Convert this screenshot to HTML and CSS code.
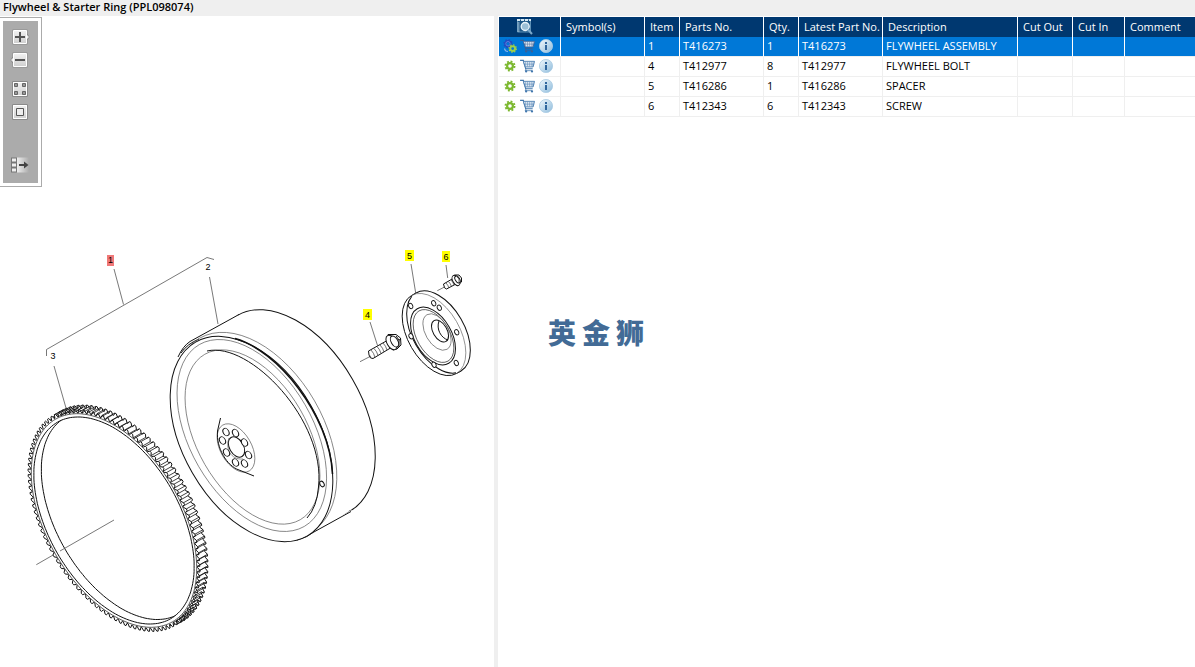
FILE: index.html
```html
<!DOCTYPE html>
<html lang="en">
<head>
<meta charset="utf-8">
<title>Flywheel &amp; Starter Ring (PPL098074)</title>
<link rel="stylesheet" href="styles.css">
</head>
<body>
<svg class="defs" aria-hidden="true">
  <defs>
    <linearGradient id="face" x1="0" y1="0" x2="0" y2="1"><stop offset="0" stop-color="#f2f2f2"/><stop offset="1" stop-color="#cfcfcf"/></linearGradient>
    <linearGradient id="fade" x1="0" y1="0" x2="1" y2="0"><stop offset="0" stop-color="#eee"/><stop offset="1" stop-color="#ababab"/></linearGradient>
    <linearGradient id="disc" x1="0" y1="0" x2="1" y2="1"><stop offset="0" stop-color="#f4fafd"/><stop offset="1" stop-color="#8dbbdc"/></linearGradient>
    <symbol id="gear" viewBox="0 0 12 12">
      <circle cx="6" cy="6" r="4.6" fill="none" stroke="currentColor" stroke-width="1.8" stroke-dasharray="1.9 1.71"/>
      <circle cx="6" cy="6" r="2.9" fill="none" stroke="currentColor" stroke-width="2.2"/>
    </symbol>
    <symbol id="gears" viewBox="0 0 14 14">
      <g fill="none" stroke="#2448c0"><circle cx="5" cy="4.7" r="4" stroke-width="1.4" stroke-dasharray="1.5 1.64"/><circle cx="5" cy="4.7" r="2.6" stroke-width="2.2"/></g>
      <circle cx="5" cy="4.7" r="2.2" fill="none" stroke="#6f98ea" stroke-width=".7"/>
      <path d="M1.500 9.500q.5 3 3.500 3" fill="none" stroke="#8db4ee" stroke-width="1.2"/>
      <g fill="none" stroke="#9fd04a"><circle cx="9.7" cy="9.6" r="3.7" stroke-width="1.2" stroke-dasharray="1.4 1.5"/><circle cx="9.7" cy="9.6" r="2.4" stroke-width="1.9"/></g>
    </symbol>
    <symbol id="cart" viewBox="0 0 17 15">
      <path d="M0 1.500H3.500L6 10.500H13.500" fill="none" stroke="currentColor" stroke-width="1.200"/>
      <path class="basket" d="M3.500 2.500H15.500L14 8.500H5.500Z" stroke="currentColor" stroke-width=".9"/>
      <path d="M6 3v5M8 3v5M10 3v5M12 3v5M14 3l-.7 5M4 5.500h11" fill="none" stroke="currentColor" stroke-width=".5"/>
      <path d="M6.500 10.500L5.500 12.500H13" fill="none" stroke="currentColor" stroke-width=".8"/>
      <circle cx="6.500" cy="13.300" r="1.200" fill="currentColor"/><circle cx="12.800" cy="13.300" r="1.200" fill="currentColor"/>
    </symbol>
    <symbol id="info" viewBox="0 0 14 14">
      <circle cx="7" cy="7" r="6.600" fill="url(#disc)" stroke="#a9cbe3" stroke-width=".8"/>
      <path d="M6 3h2v2H6zM6 6h2v5H6z" fill="#2f669d"/>
    </symbol>
    <symbol id="lookup" viewBox="0 0 16 16">
      <path d="M.5 .5H13.500V13H.5Z" fill="#1c5585" stroke="#5d90b5"/>
      <path d="M0 1H14" stroke="#d6e8f3" stroke-width="2" stroke-dasharray="3 1"/>
      <path d="M1.500 3.500V12.500" stroke="#c4dcec" stroke-width="2" stroke-dasharray="1 1"/>
      <circle cx="8.200" cy="7.500" r="4" fill="#9bbfd6" stroke="#e8f3fa" stroke-width="1.400"/>
      <path d="M11 10.500L15 15" stroke="#7aa8ca" stroke-width="2"/>
    </symbol>
  </defs>
</svg>

<header class="title-bar"><h1>Flywheel &amp; Starter Ring (PPL098074)</h1></header>
<main class="workspace">
  <section class="drawing-pane" aria-label="Parts drawing">
    <div class="toolbar" role="toolbar" aria-label="Drawing tools">
      <button class="tool" aria-label="Zoom in"><svg viewBox="0 0 18 16"><path d="M.5.5h15v4l2 3.500-2 3.500v4H.5z" fill="#8a8a8a"/><path d="M1.500 1.500h13v13h-13z" fill="url(#face)" stroke="#fff"/><path d="M15 6l2 2-2 2z" fill="#eee"/><path d="M3 8h10M8 3v10" stroke="#555" stroke-width="2"/></svg></button>
      <button class="tool" aria-label="Zoom out"><svg viewBox="-2 0 18 16" class="left-tip"><path d="M.5.5h15v15H.5v-4l-2-3.500 2-3.500z" fill="#8a8a8a"/><path d="M1.500 1.500h13v13h-13z" fill="url(#face)" stroke="#fff"/><path d="M1 6l-2 2 2 2z" fill="#eee"/><path d="M3 8h10" stroke="#555" stroke-width="2"/></svg></button>
      <button class="tool tool-spaced" aria-label="Show all"><svg viewBox="0 0 18 16"><path d="M.5.5h15v15H.5z" fill="url(#face)" stroke="#8a8a8a"/><path d="M1.500 1.500h13v13h-13z" fill="none" stroke="#fff"/><g fill="#999" stroke="#666"><path d="M2.500 2.500h3v3h-3zM10.500 2.500h3v3h-3zM2.500 10.500h3v3h-3zM10.500 10.500h3v3h-3z"/></g></svg></button>
      <button class="tool" aria-label="Fit to window"><svg viewBox="0 0 18 16"><path d="M.5.5h15v15H.5z" fill="url(#face)" stroke="#8a8a8a"/><path d="M1.500 1.500h13v13h-13z" fill="none" stroke="#fff"/><path d="M4.500 4.500h7v7h-7z" fill="#eee" stroke="#555"/></svg></button>
      <button class="tool tool-last" aria-label="Toggle list"><svg viewBox="0 0 18 16"><path d="M5 .5h12v15H5z" fill="url(#fade)"/><path d="M-1 .5h6v15h-6z" fill="#777"/><path d="M0 1.500h4v3H0zM0 6.500h4v3H0zM0 11.500h4v3H0z" fill="#eee"/><path d="M7 8h7" stroke="#444" stroke-width="2"/><path d="M12 4.500l4.500 3.500-4.500 3.500z" fill="#444"/></svg></button>
    </div>
    <svg class="drawing" viewBox="0 16 494 651" preserveAspectRatio="xMinYMin meet" role="img" aria-label="Exploded view of flywheel and starter ring">
      <g class="ink" id="ring"></g>
      <g class="ink">
        <ellipse transform="translate(294 413) rotate(60)" rx="112.800" ry="67.500"/>
        <path class="blank" d="M181 352L189 342L238 314.500L351 515L351.500 510L307.400 535.800Z"/>
        <path d="M239 314.500L190 341.500Q183 346 178 357M181 353Q187 344 199 339M351 511.500L313 532.500Q308 537 297 540"/>
        <ellipse class="thin" transform="translate(255.500 435) rotate(60)" rx="111.800" ry="68.200"/>
        <ellipse transform="translate(251.500 439) rotate(60)" rx="111.800" ry="68.200"/>
        <path class="bold" d="M235 338.500C277 350 330 415 332.500 474"/>
        <ellipse class="thin" transform="translate(251.800 435.500) rotate(60)" rx="105" ry="61.500"/>
        <ellipse class="thin" transform="translate(252.500 437) rotate(60)" rx="95.500" ry="55"/>
        <path d="M207 351C250 341 326 421 318.500 487Q317 507 307 518"/>
        <ellipse transform="translate(322 484) rotate(60)" rx="3" ry="2"/>
        <ellipse class="thin" transform="translate(236 448) rotate(60)" rx="26.500" ry="15.500"/>
        <path d="M220.500 418L217.500 431C216 448 227 466 239 470L254 476"/>
        <ellipse transform="translate(236.500 447) rotate(60)" rx="11" ry="7"/>
        <path class="thin" d="M229 438C225 449 231 460 243 459"/>
        <g class="holes"><ellipse transform="translate(226 432) rotate(60)" rx="4" ry="2.800"/><ellipse transform="translate(235.500 433) rotate(60)" rx="4" ry="2.800"/><ellipse transform="translate(244.500 442.500) rotate(60)" rx="4" ry="2.800"/><ellipse transform="translate(248.500 455) rotate(60)" rx="4" ry="2.800"/><ellipse transform="translate(244.500 463.500) rotate(60)" rx="4" ry="2.800"/><ellipse transform="translate(235.500 462.500) rotate(60)" rx="4" ry="2.800"/><ellipse transform="translate(226.500 452.500) rotate(60)" rx="4" ry="2.800"/><ellipse transform="translate(222.500 440.500) rotate(60)" rx="4" ry="2.800"/></g>
      </g>
      <g class="ink">
        <ellipse transform="translate(438.500 332) rotate(60)" rx="45" ry="26"/>
        <path class="blank" d="M411.500 295.500L416 293L461 371L456.500 373.500Z"/>
        <path d="M411.500 295.500L416 293M461 371L456.500 373.500"/>
        <path d="M411.500 295.500A45 26 60 0 0 456.500 373.500"/>
        <path class="thin" d="M411.500 295.500A45 26 60 0 1 456.500 373.500"/>
        <ellipse transform="translate(433 336) rotate(60)" rx="31.500" ry="18.500"/>
        <ellipse class="mid" transform="translate(433.500 336) rotate(60)" rx="29" ry="16.500"/>
        <ellipse class="thin" transform="translate(437 332) rotate(60)" rx="20" ry="11.500"/>
        <ellipse transform="translate(440 331) rotate(60)" rx="12" ry="7"/>
        <path d="M439 321C436 329 441 338 448 340"/>
        <g class="holes"><ellipse transform="translate(410.700 306) rotate(60)" rx="2.800" ry="2"/><ellipse transform="translate(433.700 303.300) rotate(60)" rx="2.800" ry="2"/><ellipse transform="translate(439.300 307.700) rotate(60)" rx="2.800" ry="2"/><ellipse transform="translate(456.700 332.300) rotate(60)" rx="2.800" ry="2"/><ellipse transform="translate(456.300 363) rotate(60)" rx="2.800" ry="2"/><ellipse transform="translate(434 364.700) rotate(60)" rx="2.800" ry="2"/><ellipse transform="translate(411 336.300) rotate(60)" rx="2.800" ry="2"/></g>
      </g>
      <g class="ink">
        <path class="leader" d="M360 361.700L371 356"/>
        <path d="M368.500 351L389 339.500L393 346.500L373 358.500Q370 359 369 355Z"/>
        <path class="mid" d="M371 350q3 3 4 7.500M374 348.500q3 3 4 7M377 346.500q3 3 4 7M380 345q3 3 4 7M383 343q3 3 4 7M386 341.500q3 3 4 7"/>
        <path class="solid" d="M388 334.500L396 334.500L400.500 338L401 345L397 349L393 350Z"/>
        <ellipse transform="translate(391.500 342.500) rotate(60)" rx="8" ry="4.500"/>
        <ellipse transform="translate(394.500 341.500) rotate(60)" rx="6" ry="3.300"/>
        <path d="M396 336l3 4v7M399 340l2-1"/>
      </g>
      <g class="ink">
        <path class="leader" d="M437.300 290.700L444.500 287"/>
        <path d="M443.500 284L453 278.500L456 284L446.500 289Q444 289 443.500 284Z"/>
        <path class="mid" d="M446 283q2 2 3 5M448.500 281.500q2 2 3 5M451 280q2 2 3 5"/>
        <path class="solid" d="M454.500 275L459 275L461.500 278L461.500 282L457 286Z"/>
        <ellipse transform="translate(456 280.500) rotate(60)" rx="5.600" ry="3.200"/>
        <ellipse transform="translate(457.500 279.500) rotate(60)" rx="3.800" ry="2.200"/>
        <path class="mid" d="M457 277l2 2v4"/>
      </g>
      <path class="leader" d="M214 259.500L207 257.500L46.500 349.500V356M114 269L123.500 304.500M209.500 277L218 324M54 366L66 408M411 264L415.700 293M446 265L447.700 278M370 322L377.700 346M36.300 564.700L54 554.500M60 551L114 520"/>
      <rect class="mark-red" x="107" y="255" width="7" height="11"/>
      <rect class="mark" x="405" y="250" width="9" height="11"/>
      <rect class="mark" x="442" y="251" width="8" height="11"/>
      <rect class="mark" x="363" y="309" width="9" height="11"/>
      <g class="callouts"><text x="110.500" y="263">1</text><text x="208" y="270">2</text><text x="53" y="359">3</text><text x="367.500" y="318">4</text><text x="409.500" y="259">5</text><text x="446" y="260">6</text></g>
    </svg>
  </section>
  <div class="splitter" role="separator"></div>
  <section class="list-pane" aria-label="Parts list">
    <table class="parts">
      <colgroup><col class="c-actions"><col class="c-wide"><col class="c-narrow"><col class="c-wide"><col class="c-narrow"><col class="c-wide"><col class="c-desc"><col class="c-out"><col class="c-in"><col></colgroup>
      <thead><tr><th class="lookup-cell"><button class="icon lookup" aria-label="Search parts"><svg><use href="#lookup"/></svg></button></th><th>Symbol(s)</th><th>Item</th><th>Parts No.</th><th>Qty.</th><th>Latest Part No.</th><th>Description</th><th>Cut Out</th><th>Cut In</th><th>Comment</th></tr></thead>
      <tbody>
        <tr class="selected"><td><div class="actions"><button class="icon gear" aria-label="Assembly"><svg><use href="#gears"/></svg></button><button class="icon cart" aria-label="Add to cart"><svg><use href="#cart"/></svg></button><button class="icon info" aria-label="Information"><svg><use href="#info"/></svg></button></div></td><td></td><td>1</td><td>T416273</td><td>1</td><td>T416273</td><td>FLYWHEEL ASSEMBLY</td><td></td><td></td><td></td></tr>
        <tr><td><div class="actions"><button class="icon gear" aria-label="Part"><svg><use href="#gear"/></svg></button><button class="icon cart" aria-label="Add to cart"><svg><use href="#cart"/></svg></button><button class="icon info" aria-label="Information"><svg><use href="#info"/></svg></button></div></td><td></td><td>4</td><td>T412977</td><td>8</td><td>T412977</td><td>FLYWHEEL BOLT</td><td></td><td></td><td></td></tr>
        <tr><td><div class="actions"><button class="icon gear" aria-label="Part"><svg><use href="#gear"/></svg></button><button class="icon cart" aria-label="Add to cart"><svg><use href="#cart"/></svg></button><button class="icon info" aria-label="Information"><svg><use href="#info"/></svg></button></div></td><td></td><td>5</td><td>T416286</td><td>1</td><td>T416286</td><td>SPACER</td><td></td><td></td><td></td></tr>
        <tr><td><div class="actions"><button class="icon gear" aria-label="Part"><svg><use href="#gear"/></svg></button><button class="icon cart" aria-label="Add to cart"><svg><use href="#cart"/></svg></button><button class="icon info" aria-label="Information"><svg><use href="#info"/></svg></button></div></td><td></td><td>6</td><td>T412343</td><td>6</td><td>T412343</td><td>SCREW</td><td></td><td></td><td></td></tr>
      </tbody>
    </table>
    <div class="watermark" lang="zh"><span>英</span><span>金</span><span>狮</span></div>
  </section>
</main>
<script src="ring.js"></script>
</body>
</html>
```
FILE: styles.css
```css
* { box-sizing: border-box; }
body {
  margin: 0;
  min-height: 100vh;
  display: flex;
  flex-direction: column;
  background: #fff;
  color: #000;
  font: 11px/16px "Open Sans", "Noto Sans", sans-serif;
}
.defs { position: absolute; width: 0; height: 0; }
.title-bar { background: #efefef; height: 16px; padding: 0 3px; }
.title-bar h1 { margin: 0; font-size: 11px; line-height: 14px; font-weight: 600; }
.workspace {
  flex: 1;
  display: grid;
  grid-template-columns: minmax(0, 494fr) 4px minmax(0, 697fr);
}
.drawing-pane { position: relative; overflow: hidden; }
.drawing { display: block; width: 100%; }
.splitter { background: #efefef; }
.list-pane { position: relative; padding: 1px 0 0 1px; overflow: hidden; }

.toolbar {
  position: absolute;
  top: 1px;
  left: 0;
  display: flex;
  flex-direction: column;
  gap: 7px;
  width: 42px;
  padding: 11px 12px 13px;
  border: 1px solid #ababab;
  border-left: 0;
  background: #ababab;
  box-shadow: inset 0 0 0 3px #fff;
}
.tool { width: 18px; height: 16px; padding: 0; border: 0; background: none; display: block; }
.tool svg { display: block; width: 18px; height: 16px; overflow: visible; }
.tool .left-tip { margin-left: -2px; }
.tool-spaced { margin-top: 6px; }
.tool-last { margin-top: 30px; }

.ink { fill: #fff; stroke: #111; stroke-width: 1; }
.ink .thin { fill: none; stroke: #666; stroke-width: .7; }
.ink .mid { fill: none; stroke: #333; stroke-width: .7; }
.ink .bold { fill: none; stroke-width: 1.6; }
.ink .holes { stroke-width: .9; }
.ink path { fill: none; }
.ink path.blank, .ink path.solid { fill: #fff; }
.ink .blank { stroke: none; }
.leader { fill: none; stroke: #555; stroke-width: .8; }
.mark { fill: #ff0; }
.mark-red { fill: #f07878; }
.callouts { font: 9px "Liberation Sans", Arial, sans-serif; text-anchor: middle; }

.parts { width: 100%; border-collapse: separate; border-spacing: 0; table-layout: fixed; }
.c-actions { width: 62px; }
.c-wide { width: 84px; }
.c-narrow { width: 35px; }
.c-desc { width: 135px; }
.c-out { width: 55px; }
.c-in { width: 52px; }
.parts th, .parts td { height: 20px; padding: 0 0 0 3px; text-align: left; white-space: nowrap; border-right: 1px solid #efefef; }
.parts th { padding-left: 5px; background: #003870; color: #fff; font-weight: 400; border-color: #fff; }
.parts td { padding-bottom: 2px; border-bottom: 1px solid #efefef; }
.parts td:first-child { padding: 0 0 1px 4px; }
.parts .selected td { background: #0078d7; color: #fff; border-right-color: #fff; }
.parts th:last-child, .parts td:last-child { border-right: 0; }
.parts th.lookup-cell { padding: 0 0 0 18px; }
.actions { display: flex; align-items: center; gap: 3px; height: 18px; }
.icon { padding: 0; border: 0; background: none; display: block; flex: none; }
.icon svg { display: block; width: 100%; height: 100%; }
.lookup { width: 16px; height: 16px; }
.gear { width: 14px; height: 12px; color: #7cb82f; }
.selected .gear { height: 14px; }
.cart { width: 16px; height: 14px; color: #4177ad; }
.basket { fill: #e6eef6; }
.selected .cart { color: #3c5f94; }
.info { width: 14px; height: 14px; }

.watermark {
  position: absolute;
  top: 300px;
  left: 50px;
  display: flex;
  gap: 6px;
  color: #426b96;
  font: 900 28px/32px "Noto Sans CJK SC", sans-serif;
}
```
FILE: ring.js
```javascript
// Starter ring gear: an isometric circle with teeth round its rim.
(function () {
  var NS = "http://www.w3.org/2000/svg";
  var ring = document.getElementById("ring");
  var cx = 114, cy = 520.5, dx = 8, dy = -4.5, teeth = 110;
  var c = Math.cos(Math.PI / 3), s = Math.sin(Math.PI / 3);

  function point(a, t, ox, oy) {
    var u = a * Math.cos(t), v = a * 0.577 * Math.sin(t);
    return (cx + u * c - v * s + (ox || 0)).toFixed(1) + " " + (cy + u * s + v * c + (oy || 0)).toFixed(1);
  }
  function add(d, cls, width) {
    var p = document.createElementNS(NS, "path");
    p.setAttribute("d", d);
    if (cls) p.setAttribute("class", cls);
    if (width) p.setAttribute("stroke-width", width);
    ring.appendChild(p);
  }
  function circle(a, ox, oy) {
    var d = "";
    for (var i = 0; i < 180; i++) d += (i ? "L" : "M") + point(a, i * Math.PI / 90, ox, oy);
    return d + "Z";
  }
  function rim(ox, oy) {
    var d = "", step = 2 * Math.PI / teeth;
    for (var i = 0; i < teeth; i++) {
      var t = i * step;
      d += (i ? "L" : "M") + point(118, t, ox, oy) + "L" + point(121.5, t + step * 0.3, ox, oy) +
        "L" + point(121.5, t + step * 0.6, ox, oy) + "L" + point(118, t + step * 0.8, ox, oy);
    }
    return d + "Z";
  }
  add(rim(dx, dy), "solid");
  var d = "";
  for (var i = 0; i < teeth; i++) {
    var t = (i + 0.3) * 2 * Math.PI / teeth;
    if (Math.sin(t) < 0) {
      d += "M" + point(121.5, t) + "L" + point(121.5, t, dx, dy);
      var r = (i + 0.8) * 2 * Math.PI / teeth;
      d += "M" + point(118, r) + "L" + point(118, r, dx, dy);
    }
  }
  add(rim(0, 0), "solid");
  add(d, "", 0.8);
  add(circle(117), "solid", 0.7);
  add(circle(113.4), "solid");

  // Far inner edge, seen through the opening.
  var clip = document.createElementNS(NS, "clipPath");
  clip.id = "opening";
  var hole = document.createElementNS(NS, "path");
  hole.setAttribute("d", circle(113.4));
  clip.appendChild(hole);
  ring.appendChild(clip);
  add(circle(113.4, 7.5, -4.5));
  ring.lastChild.setAttribute("clip-path", "url(#opening)");
})();
```
